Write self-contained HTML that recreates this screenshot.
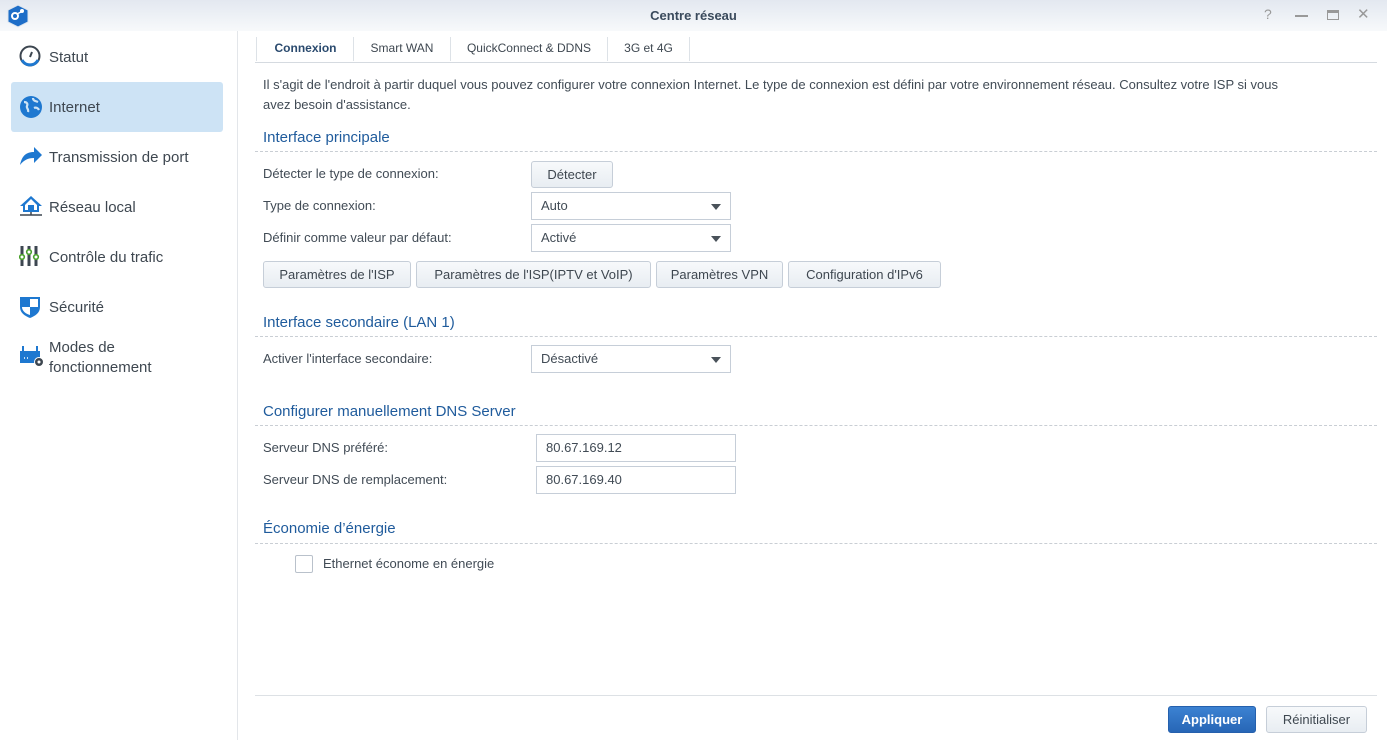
<!DOCTYPE html>
<html><head><meta charset="utf-8"><style>
*{box-sizing:border-box;margin:0;padding:0}
body{width:1387px;height:740px;overflow:hidden;background:#fff;font-family:"Liberation Sans",sans-serif;font-size:13px;color:#414b55;position:relative}
.hdr{position:absolute;left:0;top:0;width:1387px;height:31px;background:linear-gradient(#e3e8f0,#f7f9fb);}
.title{position:absolute;top:8px;left:0;width:1387px;text-align:center;font-weight:bold;font-size:13px;color:#3a4a5c}
.side{position:absolute;left:0;top:31px;width:238px;height:709px;border-right:1px solid #e3e6ea}
.item{position:absolute;left:11px;width:212px;height:50px;border-radius:3px;font-size:15px;color:#3e4750}
.item span{position:absolute;left:38px;top:17px}
.item svg{position:absolute;left:8px;top:13px}
.sel{background:#cde3f5}
.abs{position:absolute}
.tabs{position:absolute;left:255px;top:31px;width:1122px;height:32px;border-bottom:1px solid #d5dae0}
.tab{position:absolute;top:6px;font-size:12px;color:#3e4750;border-left:1px solid #dde2e7;height:24px;line-height:14px}
.h{position:absolute;left:263px;font-size:15px;color:#1f5b9c}
.dash{position:absolute;left:255px;width:1122px;border-top:1px dashed #c9ced4}
.lbl{position:absolute;left:263px;font-size:13px}
.btn{position:absolute;height:27px;border:1px solid #c6ced8;border-radius:3px;background:linear-gradient(#f7f9fb,#e8edf2);text-align:center;line-height:25px;font-size:13px;color:#3e4750}
.sel2{position:absolute;left:531px;width:200px;height:28px;border:1px solid #c6ced8;background:#fff;padding-left:9px;line-height:26px}
.sel2:after{content:"";position:absolute;right:9px;top:11px;border:5px solid transparent;border-top:6px solid #4a525a}
.inp{position:absolute;left:536px;width:200px;height:28px;border:1px solid #c6ced8;padding-left:9px;line-height:26px}
</style></head><body>
<div class="hdr"></div>
<svg class="abs" style="left:6px;top:4px" width="24" height="24" viewBox="0 0 24 24"><path d="M12 1 22 6v12l-10 5L2 18V6z" fill="#1e6ec8" stroke="#dfe6ee"/><circle cx="9" cy="12" r="3" fill="none" stroke="#fff" stroke-width="2"/><circle cx="16" cy="7" r="2" fill="#fff"/><path d="M11 10l4-2" stroke="#fff" stroke-width="1.5"/></svg>
<div class="title">Centre réseau</div>
<div class="abs" style="left:1264px;top:6px;color:#999;font-size:14px">?</div>
<div class="abs" style="left:1295px;top:15px;width:13px;height:2px;background:#999"></div>
<div class="abs" style="left:1327px;top:10px;width:12px;height:10px;border:1px solid #999;border-top:3px solid #999"></div>
<div class="abs" style="left:1357px;top:5px;color:#999;font-size:15px">✕</div>
<div class="side"></div>
<div class="item" style="top:32px"><svg width="22" height="22" viewBox="0 0 22 22"><circle cx="11" cy="11" r="9.5" fill="none" stroke="#3d4650" stroke-width="2"/><path d="M3 15a9 9 0 0 0 16 0" fill="none" stroke="#1e78d0" stroke-width="3"/><path d="M11 12l2-5" stroke="#3d4650" stroke-width="2"/></svg><span>Statut</span></div>
<div class="item sel" style="top:82px"><svg width="24" height="24" viewBox="0 0 24 24"><circle cx="12" cy="12" r="11" fill="#1e78d0"/><path d="M5 7c3 0 4 2 3 4s2 3 1 6M14 3c0 3 3 3 5 4M15 13c2-1 4 0 5 2" stroke="#cde3f5" stroke-width="2.2" fill="none"/></svg><span>Internet</span></div>
<div class="item" style="top:132px"><svg width="24" height="22" viewBox="0 0 24 22"><path d="M1 20C3 10 8 7 15 7V2l8 8-8 8v-5C9 13 5 15 1 20z" fill="#1e78d0"/></svg><span>Transmission de port</span></div>
<div class="item" style="top:182px"><svg width="24" height="22" viewBox="0 0 24 22"><path d="M12 1 1 11h3v6h16v-6h3z" fill="#1e78d0"/><path d="M12 4 6 10v5h12v-5z" fill="#fff"/><rect x="9" y="10" width="6" height="5" fill="#1e78d0"/><path d="M1 20h22M12 17v3" stroke="#3d4650" stroke-width="1.5"/></svg><span>Réseau local</span></div>
<div class="item" style="top:232px"><svg width="24" height="22" viewBox="0 0 24 22"><path d="M3 1v20M10 1v20M17 1v20" stroke="#3d4650" stroke-width="3"/><circle cx="3" cy="12" r="2.3" fill="#fff" stroke="#4aa02c" stroke-width="1.6"/><circle cx="10" cy="7" r="2.3" fill="#fff" stroke="#4aa02c" stroke-width="1.6"/><circle cx="17" cy="12" r="2.3" fill="#fff" stroke="#4aa02c" stroke-width="1.6"/></svg><span>Contrôle du trafic</span></div>
<div class="item" style="top:282px"><svg width="22" height="24" viewBox="0 0 22 24"><path d="M1 2h20v10c0 6-5 9-10 11C6 21 1 18 1 12z" fill="#1e78d0"/><path d="M11 4h8v8h-8zM3 12h8v8c-4-1-8-4-8-8z" fill="#fff"/></svg><span>Sécurité</span></div>
<div class="item" style="top:332px;height:50px"><svg width="26" height="24" viewBox="0 0 26 24" style="top:12px"><path d="M4 2v5M18 2v5" stroke="#1e78d0" stroke-width="2"/><rect x="1" y="7" width="20" height="12" fill="#1e78d0"/><circle cx="20" cy="18" r="4.5" fill="#3d4650" stroke="#fff"/><circle cx="20" cy="18" r="1.5" fill="#fff"/><path d="M5 14h1M8 14h1" stroke="#fff" stroke-width="1.5"/></svg><span style="top:6px;line-height:20px">Modes de<br>fonctionnement</span></div>
<div class="tabs">
<div class="tab" style="left:1px;width:98px;font-weight:bold;color:#2a4a6e;text-align:center;padding-top:4px">Connexion</div>
<div class="tab" style="left:98px;width:97px;text-align:center;padding-top:4px">Smart WAN</div>
<div class="tab" style="left:195px;width:157px;text-align:center;padding-top:4px">QuickConnect &amp; DDNS</div>
<div class="tab" style="left:352px;width:83px;text-align:center;padding-top:4px;border-right:1px solid #dde2e7">3G et 4G</div>
</div>
<div class="abs" style="left:263px;top:75px;width:1100px;line-height:20px;font-size:13px">Il s'agit de l'endroit à partir duquel vous pouvez configurer votre connexion Internet. Le type de connexion est défini par votre environnement réseau. Consultez votre ISP si vous<br>avez besoin d'assistance.</div>
<div class="h" style="top:129px">Interface principale</div><div class="dash" style="top:151px"></div>
<div class="lbl" style="top:166px">Détecter le type de connexion:</div>
<div class="btn" style="left:531px;top:161px;width:82px">Détecter</div>
<div class="lbl" style="top:198px">Type de connexion:</div><div class="sel2" style="top:192px">Auto</div>
<div class="lbl" style="top:230px">Définir comme valeur par défaut:</div><div class="sel2" style="top:224px">Activé</div>
<div class="btn" style="left:263px;top:261px;width:148px">Paramètres de l'ISP</div>
<div class="btn" style="left:416px;top:261px;width:235px">Paramètres de l'ISP(IPTV et VoIP)</div>
<div class="btn" style="left:656px;top:261px;width:127px">Paramètres VPN</div>
<div class="btn" style="left:788px;top:261px;width:153px">Configuration d'IPv6</div>
<div class="h" style="top:314px">Interface secondaire (LAN 1)</div><div class="dash" style="top:336px"></div>
<div class="lbl" style="top:351px">Activer l'interface secondaire:</div><div class="sel2" style="top:345px">Désactivé</div>
<div class="h" style="top:403px">Configurer manuellement DNS Server</div><div class="dash" style="top:425px"></div>
<div class="lbl" style="top:440px">Serveur DNS préféré:</div><div class="inp" style="top:434px">80.67.169.12</div>
<div class="lbl" style="top:472px">Serveur DNS de remplacement:</div><div class="inp" style="top:466px">80.67.169.40</div>
<div class="h" style="top:520px">Économie d’énergie</div><div class="dash" style="top:543px"></div>
<div class="abs" style="left:295px;top:555px;width:18px;height:18px;border:1px solid #b9c1cb;border-radius:2px"></div>
<div class="abs" style="left:323px;top:556px">Ethernet économe en énergie</div>
<div class="abs" style="left:255px;top:695px;width:1122px;border-top:1px solid #dde1e5"></div>
<div class="btn" style="left:1168px;top:706px;width:88px;background:linear-gradient(#3c82d2,#2766b6);border-color:#2560ad;color:#fff;font-weight:bold">Appliquer</div>
<div class="btn" style="left:1266px;top:706px;width:101px">Réinitialiser</div>
</body></html>
